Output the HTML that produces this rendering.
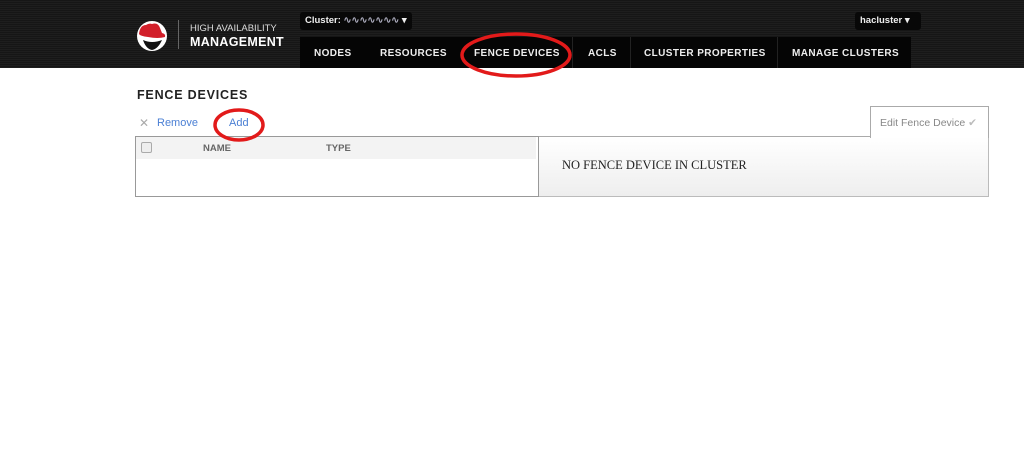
<!DOCTYPE html>
<html><head><style>
*{margin:0;padding:0;box-sizing:border-box}
body{width:1024px;height:470px;background:#fff;font-family:"Liberation Sans",sans-serif;position:relative;overflow:hidden}
.hdr{position:absolute;left:0;top:0;width:1024px;height:68px;background:#1a1a1a;background-image:repeating-linear-gradient(0deg,#1e1e1e 0 1px,#161616 1px 2px)}
.nav{position:absolute;left:300px;top:37px;width:611px;height:31px;background:#050505}
.nav span{position:absolute;top:11px;color:#eee;font-weight:bold;font-size:10px;letter-spacing:.4px;white-space:nowrap}
.sep{position:absolute;top:0;width:1px;height:31px;background:#222}
.dd{position:absolute;top:12px;height:18px;background:#080808;border-radius:3px;color:#eee;font-weight:bold;font-size:9.5px;padding:3px 5px}
.abs{position:absolute;white-space:nowrap}
</style></head><body>
<div class="hdr"></div>
<svg class="abs" style="left:136px;top:19px" width="32" height="34" viewBox="0 0 32 34">
<circle cx="16" cy="17" r="15" fill="#fff"/>
<path d="M3 15 Q4 6 10 6 Q13 4 16 5 Q22 3 24 9 L26 14 Q30 15 29 18 Q22 20 12 18 Q4 17 3 15Z" fill="#d21f2a"/>
<path d="M7 21 Q16 25 26 21 Q22 30 16 31 Q10 30 7 21Z" fill="#111"/>
</svg>
<div class="abs" style="left:178px;top:20px;width:1px;height:29px;background:#666"></div>
<div class="abs" style="left:190px;top:23px;color:#ddd;font-size:9.5px">HIGH AVAILABILITY</div>
<div class="abs" style="left:190px;top:35px;color:#fff;font-size:12.5px;font-weight:bold;letter-spacing:.3px">MANAGEMENT</div>
<div class="dd" style="left:300px;width:112px">Cluster: <span style="color:#aab">∿∿∿∿∿∿∿</span> ▾</div>
<div class="dd" style="left:855px;width:66px">hacluster ▾</div>
<div class="nav">
<span style="left:14px">NODES</span>
<span style="left:80px">RESOURCES</span>
<span style="left:174px">FENCE DEVICES</span>
<div class="sep" style="left:272px"></div>
<span style="left:288px">ACLS</span>
<div class="sep" style="left:330px"></div>
<span style="left:344px">CLUSTER PROPERTIES</span>
<div class="sep" style="left:477px"></div>
<span style="left:492px">MANAGE CLUSTERS</span>
</div>
<div class="abs" style="left:137px;top:88px;font-weight:bold;font-size:12.5px;letter-spacing:.8px;color:#222">FENCE DEVICES</div>
<div class="abs" style="left:139px;top:116px;color:#aaa;font-size:12px">✕</div>
<div class="abs" style="left:157px;top:117px;color:#4a7fd4;font-size:11px">Remove</div>
<div class="abs" style="left:229px;top:117px;color:#4a7fd4;font-size:11px">Add</div>
<div class="abs" style="left:135px;top:136px;width:405px;height:61px;border:1px solid #999;border-right:2px solid #999">
<div style="position:absolute;left:0;top:0;width:400px;height:22px;background:#f3f3f3"></div>
<div style="position:absolute;left:5px;top:5px;width:11px;height:11px;border:1px solid #aaa;border-radius:2px;background:#eee"></div>
<div style="position:absolute;left:67px;top:6px;font-size:9.5px;font-weight:bold;color:#666">NAME</div>
<div style="position:absolute;left:190px;top:6px;font-size:9.5px;font-weight:bold;color:#666">TYPE</div>
</div>
<div class="abs" style="left:539px;top:136px;width:450px;height:61px;border:1px solid #bbb;border-left:none;border-top:1px solid #aaa;background:linear-gradient(#fff,#eee)"></div>
<div class="abs" style="left:870px;top:106px;width:119px;height:32px;border:1px solid #aaa;border-bottom:none;background:#fff;color:#888;font-size:10.5px;padding:10px 0 0 9px">Edit Fence Device <span style="color:#bbb">✔</span></div>
<div class="abs" style="left:562px;top:158px;font-family:'Liberation Serif',serif;font-size:12.5px;color:#222">NO FENCE DEVICE IN CLUSTER</div>
<svg class="abs" style="left:0;top:0" width="1024" height="470">
<ellipse cx="516" cy="55" rx="54" ry="21" fill="none" stroke="#e21a1a" stroke-width="3.5"/>
<ellipse cx="239" cy="125" rx="24" ry="15" fill="none" stroke="#e21a1a" stroke-width="3.5"/>
</svg>
</body></html>
